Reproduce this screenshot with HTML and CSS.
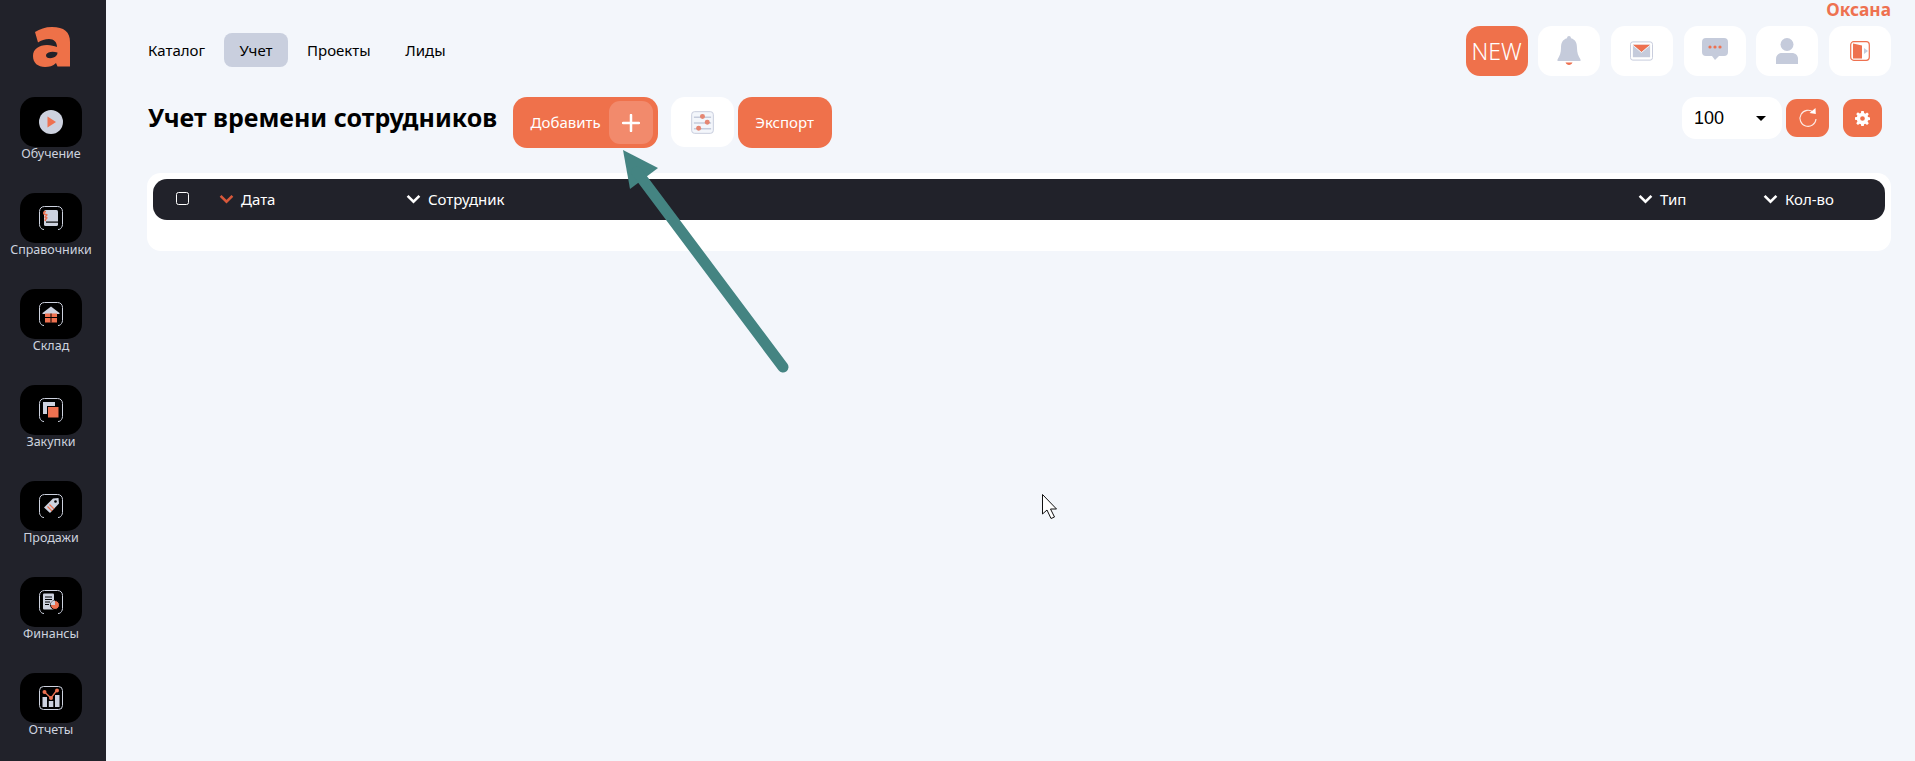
FILE: index.html
```html
<!DOCTYPE html>
<html lang="ru">
<head>
<meta charset="utf-8">
<title>Учет времени сотрудников</title>
<link rel="stylesheet" href="styles.css">
</head>
<body>
<svg class="defs" width="0" height="0" aria-hidden="true">
  <symbol id="frame" viewBox="0 0 24 24"><path d="M1.500 21.500C.9 20.500.5 19.800.5 18.500V5.500C.5 2.500 2.500.5 5.500.5h13c3 0 5 2 5 5v13c0 1.300-.4 2-1 3" fill="none" stroke="#cdd2df" stroke-width="1"/><path d="M1.500 21.500c.8 1.300 1.800 2 3.500 2M22.500 21.500c-.8 1.300-1.800 2-3.500 2" fill="none" stroke="#cdd2df" stroke-width="1"/></symbol>
</svg>
<div class="app">
  <aside class="sidebar">
    <div class="logo"><svg class="logo-mark" viewBox="0 0 37 40" role="img" aria-label="Логотип"><path fill-rule="evenodd" d="M2 5C7 2 12 0 19 0C31 0 37 5 37 15V39.500H24.500L23 36C20 39 16 40 12 40C5 40 0 36 0 29C0 22 6 18 14 18C18 18 21 19 24 20C24 15 21 12 16 12C12 12 8 13.500 5 15.500ZM24.500 25.500C21 24.500 18 24.500 15.500 25.500C13 26.500 12.500 28.500 13.500 30C15 31.500 18 31.500 20.500 30.500C23 29.500 24.500 28 24.500 25.500Z" fill="#ee7148"/></svg></div>
    <a class="side-item"><span class="tile">
      <svg class="side-icon" viewBox="0 0 24 24"><circle cx="12" cy="12" r="12" fill="#cdd2df"/><path d="M8.500 6.500L17 12l-8.500 5.500z" fill="#ee7150"/></svg></span><span class="side-label">Обучение</span></a>
    <a class="side-item"><span class="tile">
      <svg class="side-icon" viewBox="0 0 24 24"><use href="#frame"/><rect x="5" y="4" width="14" height="16" rx="1.500" fill="#cdd2df"/><rect x="7" y="15.500" width="12" height="1.200" fill="#000"/><path d="M7 5.500c-3 0-3 3 0 3s-3 3 0 3-3 3 0 3" fill="none" stroke="#ee7150" stroke-width="1.500"/></svg></span><span class="side-label">Справочники</span></a>
    <a class="side-item"><span class="tile">
      <svg class="side-icon" viewBox="0 0 24 24"><use href="#frame"/><path d="M3.500 11L12 4.500 20.500 11v1h-17z" fill="#cdd2df"/><rect x="6" y="11.500" width="12" height="9" fill="#ee7150"/><path d="M12 11.500v9M6 15.500h12" stroke="#000" stroke-width="1"/></svg></span><span class="side-label">Склад</span></a>
    <a class="side-item"><span class="tile">
      <svg class="side-icon" viewBox="0 0 24 24"><use href="#frame"/><rect x="4" y="4" width="12" height="12" fill="#cdd2df"/><rect x="8.500" y="8.500" width="11.500" height="11.500" fill="#ee7150" stroke="#000" stroke-width="1"/></svg></span><span class="side-label">Закупки</span></a>
    <a class="side-item"><span class="tile">
      <svg class="side-icon" viewBox="0 0 24 24"><use href="#frame"/><path d="M5 13.500L14 4.500l5.500-.5.500 5.500-9 9.500z" fill="#cdd2df"/><circle cx="16.500" cy="7.500" r="1.300" fill="#000"/><path d="M8.500 12.500l4.500 4.500M10.500 10.500l4.500 4.500" stroke="#ee7150" stroke-width="1.200"/></svg></span><span class="side-label">Продажи</span></a>
    <a class="side-item"><span class="tile">
      <svg class="side-icon" viewBox="0 0 24 24"><use href="#frame"/><rect x="4" y="3.500" width="11" height="16" rx="1" fill="#cdd2df"/><path d="M6 7h7M6 9.500h7M6 12h5M6 14.500h4" stroke="#000" stroke-width="1"/><circle cx="16" cy="15" r="4.500" fill="#ee7150" stroke="#000" stroke-width="1"/><path d="M16 15v-4.500a4.500 4.500 0 0 0-4.500 4.500z" fill="#cdd2df"/></svg></span><span class="side-label">Финансы</span></a>
    <a class="side-item"><span class="tile">
      <svg class="side-icon" viewBox="0 0 24 24"><rect x=".5" y=".5" width="23" height="23" rx="4" fill="none" stroke="#cdd2df"/><rect x="3.500" y="11" width="4.500" height="10" fill="#cdd2df"/><rect x="9.800" y="15" width="4.500" height="6" fill="#cdd2df"/><rect x="16" y="9" width="4.500" height="12" fill="#cdd2df"/><path d="M5.500 6l6.500 6 6-8" fill="none" stroke="#ee7150" stroke-width="1.300"/><circle cx="5.500" cy="6" r="2" fill="#ee7150"/><circle cx="12" cy="12" r="2" fill="#ee7150"/><circle cx="18" cy="4.500" r="2" fill="#ee7150"/></svg></span><span class="side-label">Отчеты</span></a>
  </aside>
  <main class="main">
    <header class="topbar">
      <nav class="nav">
        <a class="nav-link">Каталог</a>
        <a class="nav-link is-active">Учет</a>
        <a class="nav-link">Проекты</a>
        <a class="nav-link">Лиды</a>
      </nav>
      <div class="account">
        <div class="user-name">Оксана</div>
        <div class="icon-row">
          <button class="square orange new-btn">NEW</button>
          <button class="square"><svg class="ic-bell" viewBox="0 0 24 30"><path d="M12 0c1.200 0 1.800.8 2 2.200C18.500 3.500 20 7 20 12c0 4.500 1.200 8 3.500 11.500V25H.5v-1.500C2.800 20 4 16.500 4 12c0-5 1.500-8.500 6-9.800C10.200.8 10.800 0 12 0z" fill="#c5cbdb"/><path d="M8.500 26.500h7c-.6 1.500-2 2.500-3.500 2.500s-2.900-1-3.500-2.500z" fill="#ee7150"/></svg></button>
          <button class="square"><svg class="ic-mail" viewBox="0 0 24 20"><rect x=".5" y=".5" width="23" height="19" rx="2.500" fill="#fff" stroke="#c5cbdb"/><rect x="3" y="3.500" width="18" height="13" fill="#c5cbdb"/><path d="M3 3.500h18L12 11z" fill="#ee7150"/><path d="M3 4l9 7.500L21 4" fill="none" stroke="#fff" stroke-width=".8"/></svg></button>
          <button class="square"><svg class="ic-chat" viewBox="0 0 26 22"><path d="M4 0h18a4 4 0 0 1 4 4v10a4 4 0 0 1-4 4h-5l-4 4-3-4H4a4 4 0 0 1-4-4V4a4 4 0 0 1 4-4z" fill="#c5cbdb"/><circle cx="8" cy="9" r="1.600" fill="#ee7150"/><circle cx="13" cy="9" r="1.600" fill="#ee7150"/><circle cx="18" cy="9" r="1.600" fill="#ee7150"/></svg></button>
          <button class="square"><svg class="ic-user" viewBox="0 0 22 26"><circle cx="11" cy="6.500" r="6.500" fill="#c5cbdb"/><path d="M0 26v-5c0-4 3-6 6-6h10c3 0 6 2 6 6v5z" fill="#c5cbdb"/></svg></button>
          <button class="square"><svg class="ic-exit" viewBox="0 0 20 20"><rect x=".7" y=".7" width="18.600" height="18.600" rx="3" fill="#fff" stroke="#ee7150" stroke-width="1.200"/><path d="M3 2.500L12 4.500v13L3 17.500z" fill="#ee7150"/><path d="M14 7l4 3-4 3z" fill="#c5cbdb"/></svg></button>
        </div>
      </div>
    </header>
    <section class="toolbar">
      <div class="toolbar-left">
        <h1 class="title">Учет времени сотрудников</h1>
        <button class="btn add-btn">Добавить<span class="plus"><svg viewBox="0 0 18 18"><path d="M9 1v16M1 9h16" stroke="#fff" stroke-width="2.500" stroke-linecap="round"/></svg></span></button>
        <button class="square filter-btn"><svg class="ic-filter" viewBox="0 0 24 24"><rect x=".7" y=".7" width="22.600" height="22.600" rx="3" fill="#f3f6fb" stroke="#c5cbdb"/><path d="M3 6.500h18M3 12.500h18M3 18.500h18" stroke="#c5cbdb" stroke-width="1.500"/><circle cx="12" cy="5.800" r="2.600" fill="#e58672"/><circle cx="17" cy="11.800" r="2.600" fill="#e58672"/><circle cx="8" cy="18" r="2.600" fill="#e58672"/></svg></button>
        <button class="btn export-btn">Экспорт</button>
      </div>
      <div class="toolbar-right">
        <div class="select"><span>100</span><i class="caret"></i></div>
        <button class="round-btn refresh-btn"><svg viewBox="0 0 20 20"><path d="M15.500 4.500A8 8 0 1 0 18 11" fill="none" stroke="#fff" stroke-opacity=".85" stroke-width="1.100"/><path d="M11.500 5l6.300 1-.3-6z" fill="#fff"/></svg></button>
        <button class="round-btn gear-btn"><svg viewBox="0 0 16 16"><path d="M6.700 0h2.600l.4 2.200 1.300.6 1.900-1.300 1.800 1.800-1.300 1.900.6 1.300 2 .4v2.600l-2 .4-.6 1.300 1.300 1.900-1.800 1.800-1.900-1.300-1.300.6-.4 2H6.700l-.4-2-1.300-.6-1.900 1.300-1.800-1.800 1.300-1.900L2 9.700 0 9.300V6.700l2-.4.600-1.300-1.300-1.900 1.800-1.800L5 2.600l1.300-.6zM8 5.500a2.500 2.500 0 1 0 0 5 2.500 2.500 0 0 0 0-5z" fill="#fff" fill-rule="evenodd"/></svg></button>
      </div>
    </section>
    <section class="card">
      <div class="thead">
        <span class="check"></span>
        <div class="th th-date"><svg class="chev chev-on" viewBox="0 0 14 9"><path d="M1.500 1.500L7 7l5.500-5.500" fill="none" stroke-width="2.400"/></svg>Дата</div>
        <div class="th th-emp"><svg class="chev" viewBox="0 0 14 9"><path d="M1.500 1.500L7 7l5.500-5.500" fill="none" stroke-width="2.400"/></svg>Сотрудник</div>
        <div class="th th-type"><svg class="chev" viewBox="0 0 14 9"><path d="M1.500 1.500L7 7l5.500-5.500" fill="none" stroke-width="2.400"/></svg>Тип</div>
        <div class="th th-qty"><svg class="chev" viewBox="0 0 14 9"><path d="M1.500 1.500L7 7l5.500-5.500" fill="none" stroke-width="2.400"/></svg>Кол-во</div>
      </div>
    </section>
  </main>
</div>
<svg class="arrow" viewBox="0 0 200 240" aria-hidden="true">
  <path d="M6 10L41 28 13 49z" fill="#448482"/>
  <path d="M20 32L166 227" stroke="#448482" stroke-width="11" stroke-linecap="round"/>
</svg>
<svg class="cursor" viewBox="0 0 17 28" aria-hidden="true">
  <path d="M1.500 1.500V21l4.500-4 4 8.500 3.500-1.500-4-8h6z" fill="#fff" stroke="#111" stroke-width="1"/>
</svg>
</body>
</html>
```
FILE: styles.css
```css
* { box-sizing: border-box; }
html, body { margin: 0; height: 100%; }
body {
  background: #f3f6fb;
  font-family: "Noto Sans", "Open Sans", sans-serif;
  color: #000;
  overflow: hidden;
  position: relative;
}
.defs { position: absolute; }
.app { display: flex; min-height: 761px; }

.sidebar {
  width: 106px;
  flex: none;
  background: #21222a;
  display: flex;
  flex-direction: column;
  align-items: center;
  padding-right: 4px;
}
.logo {
  height: 97px;
  width: 100%;
  padding-top: 27px;
  display: flex;
  justify-content: center;
  align-items: flex-start;
}
.logo-mark { width: 37px; height: 40px; }
.side-item {
  height: 96px;
  display: flex;
  flex-direction: column;
  align-items: center;
  width: 100%;
}
.tile {
  width: 62px;
  height: 50px;
  flex: none;
  background: #000;
  border-radius: 15px;
  display: flex;
  align-items: center;
  justify-content: center;
}
.side-icon { width: 24px; height: 24px; }
.side-label {
  font-size: 12.500px;
  line-height: 18px;
  margin-top: -2px;
  color: #cdd2df;
  white-space: nowrap;
}

.main { flex: 1; min-width: 0; padding: 0 24px 0 41px; }

.topbar { display: flex; justify-content: space-between; height: 97px; }
.nav { display: flex; gap: 2.600px; margin: 33px 0 0 -15px; align-items: flex-start; }
.nav-link {
  height: 34px;
  padding: 0 16px;
  display: flex;
  align-items: center;
  font-size: 15px;
  border-radius: 8px;
}
.nav-link.is-active { background: #c9cfde; }
.account { display: flex; flex-direction: column; align-items: flex-end; }
.user-name {
  font-size: 17.300px;
  font-weight: 700;
  line-height: 20px;
  color: #ee7150;
}
.icon-row { display: flex; gap: 10.700px; margin-top: 6px; }

button { font-family: inherit; border: 0; padding: 0; margin: 0; cursor: pointer; }
.square {
  width: 62px;
  height: 50px;
  border-radius: 14px;
  background: #fff;
  display: flex;
  align-items: center;
  justify-content: center;
}
.orange { background: #ef714b; }
.new-btn { color: #fff; font-size: 23px; font-weight: 300; }
.ic-bell { width: 24px; height: 30px; }
.ic-mail { width: 23px; height: 20px; }
.ic-chat { width: 26px; height: 22px; margin-bottom: 4px; }
.ic-user { width: 22px; height: 26px; }
.ic-exit { width: 20px; height: 20px; }

.toolbar { display: flex; justify-content: space-between; align-items: flex-start; }
.toolbar-left { display: flex; align-items: flex-start; margin-left: 1px; }
.title {
  margin: 0;
  font-size: 25px;
  font-weight: 700;
  line-height: 41px;
  white-space: nowrap;
}
.btn {
  height: 51px;
  background: #ef714b;
  color: #fff;
  font-size: 15px;
  border-radius: 14px;
}
.add-btn {
  width: 145px;
  margin-left: 15.500px;
  display: flex;
  align-items: center;
  justify-content: space-between;
  padding: 0 5px 2px 18px;
}
.plus {
  width: 44px;
  height: 43px;
  margin-bottom: -2px;
  border-radius: 11px;
  background: #f28a6c;
  display: flex;
  align-items: center;
  justify-content: center;
}
.plus svg { width: 18px; height: 18px; }
.filter-btn { margin-left: 13px; width: 63px; }
.ic-filter { width: 23px; height: 23px; }
.export-btn { width: 94px; margin-left: 4px; padding-bottom: 2px; }

.toolbar-right { display: flex; align-items: flex-start; margin-right: 9px; }
.select {
  width: 100px;
  height: 42px;
  background: #fff;
  border-radius: 14px;
  display: flex;
  align-items: center;
  padding: 0 16px 0 12px;
  justify-content: space-between;
  font-family: "Liberation Sans", sans-serif;
  font-size: 18px;
}
.caret {
  width: 0;
  height: 0;
  border-left: 5px solid transparent;
  border-right: 5px solid transparent;
  border-top: 5px solid #000;
}
.round-btn {
  height: 38px;
  margin-top: 2px;
  background: #ef714b;
  border-radius: 11px;
  display: flex;
  align-items: center;
  justify-content: center;
}
.refresh-btn { width: 43px; margin-left: 4px; }
.refresh-btn svg { width: 20px; height: 20px; }
.gear-btn { width: 39px; margin-left: 14px; }
.gear-btn svg { width: 15px; height: 15px; }

.card {
  margin-top: 25px;
  height: 78px;
  background: #fff;
  border-radius: 14px;
  padding: 6px;
}
.thead {
  height: 41px;
  padding-bottom: 1px;
  background: #21222a;
  border-radius: 14px;
  color: #fff;
  font-size: 15px;
  display: flex;
  align-items: center;
  position: relative;
}
.check {
  width: 13px;
  height: 13px;
  border: 1px solid #fff;
  border-radius: 2.500px;
  margin: -1px 0 0 23px;
}
.th { display: flex; align-items: center; gap: 7px; }
.th-date { margin-left: 30px; width: 187px; }
.th-emp { flex: 1; }
.th-type { width: 125px; }
.th-qty { width: 122px; }
.chev { width: 15px; height: 10px; stroke: #fff; }
.chev-on { stroke: #d8583a; }

.arrow {
  position: absolute;
  left: 617px;
  top: 140px;
  width: 200px;
  height: 240px;
}
.cursor {
  position: absolute;
  left: 1041px;
  top: 493px;
  width: 17px;
  height: 28px;
}
```
